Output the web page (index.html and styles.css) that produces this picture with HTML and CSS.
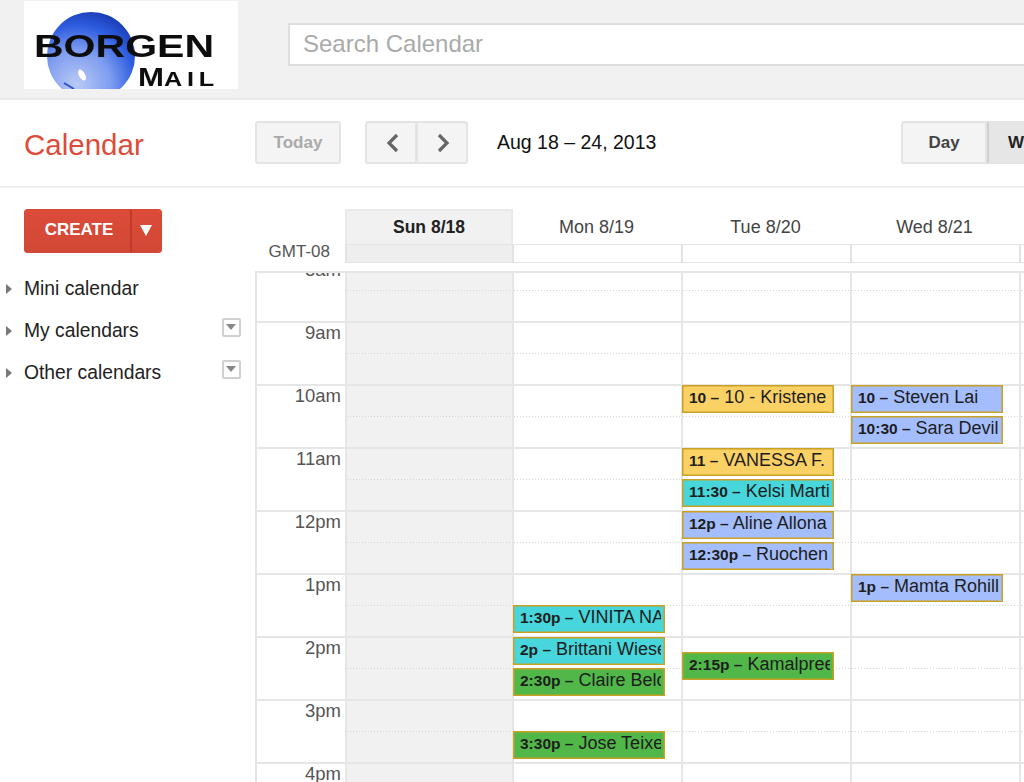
FILE: index.html
```html
<!DOCTYPE html>
<html lang="en">
<head>
<meta charset="utf-8">
<title>Calendar</title>
<link rel="stylesheet" href="styles.css">
</head>
<body>
<header class="topbar">
  <svg class="logo" viewBox="0 0 214 88" width="214" height="88" role="img" aria-label="Borgen Mail">
    <defs>
      <radialGradient id="ball" cx="0.34" cy="0.82" r="0.85">
        <stop offset="0" stop-color="#b9caf5"/>
        <stop offset="0.45" stop-color="#7f9df0"/>
        <stop offset="0.78" stop-color="#2f5de0"/>
        <stop offset="1" stop-color="#1c3fb8"/>
      </radialGradient>
      <filter id="soft"><feGaussianBlur stdDeviation="0.6"/></filter>
    </defs>
    <rect width="214" height="88" fill="#fff"/>
    <g filter="url(#soft)">
      <circle cx="67" cy="55" r="44" fill="url(#ball)"/>
      <ellipse cx="58" cy="74" rx="3" ry="6" fill="#fff" transform="rotate(-30 58 74)"/>
      <path d="M40 82 L50 88" stroke="#2b50c8" stroke-width="2" fill="none"/>
      <text class="logo-big" x="10" y="56" textLength="180" lengthAdjust="spacingAndGlyphs">BORGEN</text>
      <text class="logo-small" transform="translate(114 85) scale(1.2 1)" x="0" y="0"><tspan class="logo-m">M</tspan>AIL</text>
    </g>
  </svg>
  <div class="search">Search Calendar</div>
</header>

<section class="toolbar">
  <h1 class="brand">Calendar</h1>
  <button class="btn today">Today</button>
  <div class="nav-group">
    <button class="btn nav-btn" aria-label="Previous">
      <svg viewBox="0 0 16 22" width="16" height="22"><path d="M13 3 L5 11 L13 19" fill="none" stroke="#666" stroke-width="3.2"/></svg>
    </button>
    <button class="btn nav-btn" aria-label="Next">
      <svg viewBox="0 0 16 22" width="16" height="22"><path d="M4 3 L12 11 L4 19" fill="none" stroke="#666" stroke-width="3.2"/></svg>
    </button>
  </div>
  <div class="range">Aug 18 – 24, 2013</div>
  <div class="views">
    <button class="btn view">Day</button>
    <button class="btn view active">Week</button>
  </div>
</section>

<main class="content">
  <aside class="sidebar">
    <div class="create">
      <span class="create-label">CREATE</span>
      <span class="create-arrow"></span>
    </div>
    <ul class="cal-list">
      <li class="cal-item"><span class="tri"></span><span class="cal-name">Mini calendar</span></li>
      <li class="cal-item"><span class="tri"></span><span class="cal-name">My calendars</span><span class="menu-box"></span></li>
      <li class="cal-item"><span class="tri"></span><span class="cal-name">Other calendars</span><span class="menu-box"></span></li>
    </ul>
  </aside>

  <section class="calendar">
    <div class="head-row">
      <div class="gutter-head"></div>
      <div class="day-head today-head">Sun 8/18</div>
      <div class="day-head">Mon 8/19</div>
      <div class="day-head">Tue 8/20</div>
      <div class="day-head">Wed 8/21</div>
    </div>
    <div class="allday-row">
      <div class="gutter-allday">GMT-08</div>
      <div class="allday today-allday"></div>
      <div class="allday"></div>
      <div class="allday"></div>
      <div class="allday"></div>
      <div class="allday"></div>
    </div>
    <div class="grid-window">
      <div class="grid">
        <div class="times">
          <div class="time">8am</div>
          <div class="time">9am</div>
          <div class="time">10am</div>
          <div class="time">11am</div>
          <div class="time">12pm</div>
          <div class="time">1pm</div>
          <div class="time">2pm</div>
          <div class="time">3pm</div>
          <div class="time">4pm</div>
        </div>
        <div class="col col-today"></div>
        <div class="col">
          <div class="event teal" style="top:345px"><b>1:30p –</b> VINITA NARAYAN</div>
          <div class="event teal" style="top:377px"><b>2p –</b> Brittani Wiesel</div>
          <div class="event green" style="top:408px"><b>2:30p –</b> Claire Belcher</div>
          <div class="event green" style="top:471px"><b>3:30p –</b> Jose Teixeira</div>
        </div>
        <div class="col">
          <div class="event yellow" style="top:125px"><b>10 –</b> 10 - Kristene</div>
          <div class="event yellow" style="top:188px"><b>11 –</b> VANESSA F.</div>
          <div class="event teal" style="top:219px"><b>11:30 –</b> Kelsi Martin</div>
          <div class="event blue" style="top:251px"><b>12p –</b> Aline Allona</div>
          <div class="event blue" style="top:282px"><b>12:30p –</b> Ruochen Liu</div>
          <div class="event green" style="top:392px"><b>2:15p –</b> Kamalpreet</div>
        </div>
        <div class="col">
          <div class="event blue" style="top:125px"><b>10 –</b> Steven Lai</div>
          <div class="event blue" style="top:156px"><b>10:30 –</b> Sara Deville</div>
          <div class="event blue" style="top:314px"><b>1p –</b> Mamta Rohilla</div>
        </div>
        <div class="col"></div>
      </div>
    </div>
  </section>
</main>
</body>
</html>
```
FILE: styles.css
```css
* { box-sizing: border-box; }
html, body { margin: 0; height: 100%; }
body {
  width: 1024px;
  height: 782px;
  overflow: hidden;
  background: #fff;
  color: #222;
  font-family: "Liberation Sans", Arial, sans-serif;
}
button { font-family: inherit; }

/* top bar */
.topbar {
  height: 100px;
  background: #f1f1f1;
  border-bottom: 2px solid #e8e8e8;
  display: flex;
  align-items: flex-start;
  padding: 1px 0 0 24px;
}
.logo { display: block; flex: none; }
.logo-big { font: bold 32px "Liberation Sans", sans-serif; fill: #0c0c10; }
.logo-small { font: bold 21px "Liberation Sans", sans-serif; fill: #0c0c10; letter-spacing: 4px; }
.logo-m { font-size: 26px; letter-spacing: 0; }
.search {
  flex: none;
  width: 800px;
  height: 43px;
  margin: 22px 0 0 50px;
  padding-left: 13px;
  background: #fff;
  border: 2px solid #dedede;
  color: #aaa;
  font-size: 24px;
  line-height: 38px;
}

/* toolbar */
.toolbar {
  height: 88px;
  border-bottom: 2px solid #eeeeee;
  display: flex;
  align-items: flex-start;
  padding: 21px 0 0 24px;
  white-space: nowrap;
}
.brand {
  margin: 0;
  width: 231px;
  flex: none;
  color: #dd4b39;
  font-size: 29.5px;
  font-weight: 400;
  line-height: 48px;
}
.btn {
  height: 43px;
  margin: 0;
  padding: 0;
  background: #f4f4f4;
  border: 2px solid #e4e4e4;
  border-radius: 3px;
  color: #444;
  font-size: 17px;
  font-weight: 700;
}
.today { width: 86px; flex: none; color: #aaa; margin-right: 24px; }
.nav-group { display: flex; flex: none; width: 103px; margin-right: 29px; }
.nav-btn {
  width: 52px;
  display: flex;
  align-items: center;
  justify-content: center;
}
.nav-btn svg { margin-left: 2px; }
.nav-btn:first-child { border-radius: 3px 0 0 3px; }
.nav-btn:last-child { border-radius: 0 3px 3px 0; margin-left: -1px; }
.range {
  flex: none;
  width: 404px;
  color: #111;
  font-size: 19.5px;
  line-height: 43px;
}
.views { display: flex; flex: none; }
.view { width: 86px; flex: none; }
.view:first-child { border-radius: 3px 0 0 3px; }
.view.active {
  background: #e6e6e6;
  border-left: 2px solid #d0d0d0;
  color: #222;
  border-radius: 0 3px 3px 0;
}

/* main */
.content { display: flex; align-items: flex-start; }
.sidebar { width: 255px; flex: none; padding: 21px 0 0 0; }
.create {
  margin-left: 24px;
  width: 138px;
  height: 44px;
  display: flex;
  background: linear-gradient(#dd4b39, #d14836);
  border-radius: 3px;
  border: 1px solid #d14836;
}
.create-label {
  width: 107px;
  padding-left: 3px;
  border-right: 2px solid #c13a2a;
  color: #fff;
  font-size: 17px;
  font-weight: 700;
  line-height: 40px;
  text-align: center;
}
.create-arrow {
  flex: 1;
  position: relative;
}
.create-arrow::after {
  content: "";
  position: absolute;
  left: 8px;
  top: 15px;
  border-style: solid;
  border-width: 11px 6.5px 0 6.5px;
  border-color: #fff transparent transparent transparent;
}
.cal-list { list-style: none; margin: 15px 0 0; padding: 0; }
.cal-item {
  height: 42px;
  display: flex;
  align-items: center;
  padding-left: 6px;
  font-size: 19.3px;
  position: relative;
}
.tri {
  flex: none;
  width: 0;
  height: 0;
  margin-right: 12px;
  border-style: solid;
  border-width: 5.5px 0 5.5px 6px;
  border-color: transparent transparent transparent #777;
}
.cal-name { color: #222; }
.menu-box {
  position: absolute;
  left: 222px;
  top: 8px;
  width: 19px;
  height: 19px;
  background: #fff;
  border: 2px solid #d0d0d0;
  border-radius: 2px;
}
.menu-box::after {
  content: "";
  position: absolute;
  left: 2px;
  top: 4px;
  border-style: solid;
  border-width: 6px 5.5px 0 5.5px;
  border-color: #888 transparent transparent transparent;
}

/* calendar */
.calendar { flex: none; width: 769px; padding-top: 21px; }
.head-row { display: flex; height: 35px; }
.gutter-head { width: 90px; flex: none; }
.day-head {
  width: 169px;
  flex: none;
  text-align: center;
  color: #444;
  font-size: 18px;
  line-height: 36px;
}
.today-head {
  width: 168px;
  margin-right: -1px;
  background: #f1f1f1;
  border: 2px solid #e9e9e9;
  border-bottom: 0;
  color: #222;
  font-size: 17.5px;
  font-weight: 700;
  line-height: 33px;
}
.allday-row { display: flex; height: 27px; }
.gutter-allday {
  width: 90px;
  flex: none;
  text-align: right;
  padding-right: 15px;
  color: #555;
  font-size: 17px;
  line-height: 15px;
}
.allday {
  width: 169px;
  flex: none;
  height: 19px;
  border: 1px solid #e3e3e3;
  border-left-width: 2px;
  border-right: 0;
}
.today-allday { width: 167px; background: #eee; }
.grid-window {
  height: 511px;
  overflow: hidden;
  border-top: 2px solid #e6e6e6;
}
.grid { display: flex; margin-top: -13px; }
.times {
  width: 90px;
  flex: none;
  border-left: 2px solid #e6e6e6;
}
.time {
  height: 63px;
  border-bottom: 2px solid #e6e6e6;
  text-align: right;
  padding: 0 4px 0 0;
  color: #555;
  font-size: 18.5px;
  line-height: 20px;
}
.col {
  position: relative;
  width: 169px;
  height: 567px;
  flex: none;
  border-left: 2px solid #e6e6e6;
  background: repeating-linear-gradient(180deg, transparent 0 61px, #e6e6e6 61px 63px);
}
.col::before {
  content: "";
  position: absolute;
  inset: 0;
  background: repeating-linear-gradient(180deg, transparent 0 30px, #d6d6d6 30px 31px, transparent 31px 63px);
  -webkit-mask: linear-gradient(90deg, #000 50%, transparent 50%) 0 0 / 3px 100%;
  mask: linear-gradient(90deg, #000 50%, transparent 50%) 0 0 / 3px 100%;
}
.col-today { width: 167px; background-color: #f1f1f1; }
.event {
  position: absolute;
  left: -1px;
  width: 152px;
  height: 28px;
  padding-left: 7px;
  overflow: hidden;
  white-space: nowrap;
  box-shadow: inset 0 0 0 1.5px #c9a124;
  color: #1d1d1d;
  font-size: 18px;
  line-height: 24px;
}
.event b { font-size: 15.5px; }
.event::after {
  content: "";
  position: absolute;
  right: 0;
  top: 1.5px;
  bottom: 1.5px;
  width: 4.5px;
  background: inherit;
  box-shadow: inset -1.5px 0 0 #c9a124;
}
.yellow { background: #fad165; }
.blue { background: #a4bdfc; }
.teal { background: #46d6db; }
.green { background: #51b749; }
```
